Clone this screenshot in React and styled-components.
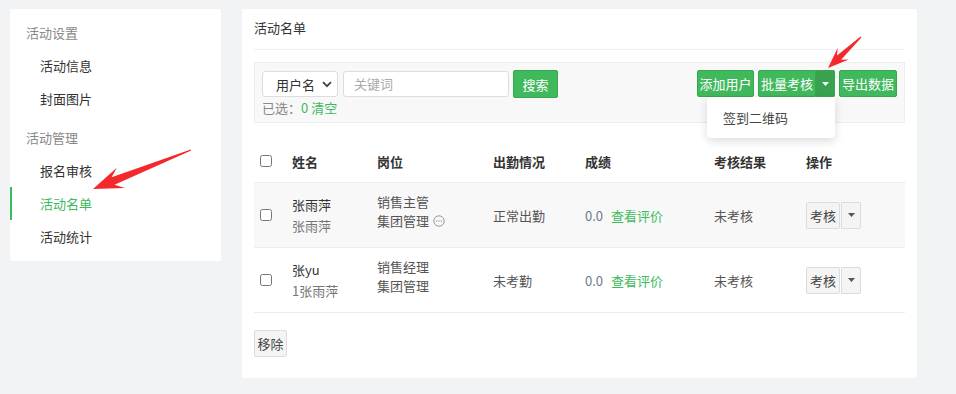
import React from 'react'
import styled, { createGlobalStyle } from 'styled-components'

const GlobalStyle = createGlobalStyle`
    body {
        margin: 0;
        background: #f2f3f5;
        font-family: "Noto Sans CJK SC", "Liberation Sans", sans-serif;
        font-size: 13px;
        color: #333;
    }
`

const GREEN = '#40b95c'

const rows = [
    { name: '张雨萍', sub: '张雨萍', job: '销售主管', dept: '集团管理', more: true, attend: '正常出勤', score: '0.0', result: '未考核', striped: true },
    { name: '张yu', sub: '1张雨萍', job: '销售经理', dept: '集团管理', more: false, attend: '未考勤', score: '0.0', result: '未考核', striped: false },
]

function arrowPoints(tail, tip, head, hw, sw) {
    const dx = tip[0] - tail[0]
    const dy = tip[1] - tail[1]
    const len = Math.hypot(dx, dy)
    const ux = dx / len
    const uy = dy / len
    const nx = -uy
    const ny = ux
    const neck = [tip[0] - ux * head * 0.72, tip[1] - uy * head * 0.72]
    const wing = [tip[0] - ux * head, tip[1] - uy * head]
    const pts = [
        [tail[0] + nx * 0.6, tail[1] + ny * 0.6],
        [neck[0] + nx * sw, neck[1] + ny * sw],
        [wing[0] + nx * hw, wing[1] + ny * hw],
        tip,
        [wing[0] - nx * hw, wing[1] - ny * hw],
        [neck[0] - nx * sw, neck[1] - ny * sw],
        [tail[0] - nx * 0.6, tail[1] - ny * 0.6],
    ]
    return pts.map(p => p.map(v => v.toFixed(1)).join(',')).join(' ')
}

function Caret({ color = '#fff' }) {
    return (
        <svg width="7" height="4" viewBox="0 0 7 4">
            <path d="M0 0 L7 0 L3.5 4 Z" fill={color} />
        </svg>
    )
}

function MoreIcon() {
    return (
        <svg width="12" height="12" viewBox="0 0 12 12" style={{ marginLeft: 4, verticalAlign: '-1px' }}>
            <circle cx="6" cy="6" r="5.2" fill="none" stroke="#999" strokeWidth="1" />
            <circle cx="3.7" cy="6" r="0.7" fill="#999" />
            <circle cx="6" cy="6" r="0.7" fill="#999" />
            <circle cx="8.3" cy="6" r="0.7" fill="#999" />
        </svg>
    )
}

function App() {
    return (
        <Page>
            <GlobalStyle />
            <Sidebar>
                <GroupTitle>活动设置</GroupTitle>
                <NavItem>活动信息</NavItem>
                <NavItem>封面图片</NavItem>
                <GroupTitle $gap>活动管理</GroupTitle>
                <NavItem>报名审核</NavItem>
                <NavItem $active>活动名单</NavItem>
                <NavItem>活动统计</NavItem>
            </Sidebar>

            <Main>
                <Title>活动名单</Title>

                <Toolbar>
                    <SearchArea>
                        <SearchRow>
                            <Select>
                                <span>用户名</span>
                                <svg width="10" height="7" viewBox="0 0 10 7">
                                    <path d="M1 1.2 L5 5.2 L9 1.2" fill="none" stroke="#444" strokeWidth="1.8" />
                                </svg>
                            </Select>
                            <Input>关键词</Input>
                            <GreenButton $w={45} $h={28}>搜索</GreenButton>
                        </SearchRow>
                        <Selected>已选：<Green>0 清空</Green></Selected>
                    </SearchArea>

                    <Actions>
                        <GreenButton $w={57}>添加用户</GreenButton>
                        <SplitWrap>
                            <GreenButton $w={58} $joinRight>批量考核</GreenButton>
                            <CaretButton><Caret /></CaretButton>
                            <Menu>
                                <MenuItem>签到二维码</MenuItem>
                            </Menu>
                        </SplitWrap>
                        <GreenButton $w={58}>导出数据</GreenButton>
                    </Actions>
                </Toolbar>

                <Table>
                    <HeadRow>
                        <CheckCell><Check type="checkbox" /></CheckCell>
                        <div>姓名</div>
                        <div>岗位</div>
                        <div>出勤情况</div>
                        <div>成绩</div>
                        <div>考核结果</div>
                        <div>操作</div>
                    </HeadRow>
                    {rows.map(r => (
                        <Row key={r.sub} $striped={r.striped}>
                            <CheckCell><Check type="checkbox" /></CheckCell>
                            <NameCell>
                                <div>{r.name}</div>
                                <Sub>{r.sub}</Sub>
                            </NameCell>
                            <JobCell>
                                <div>{r.job}</div>
                                <div>{r.dept}{r.more && <MoreIcon />}</div>
                            </JobCell>
                            <Plain>{r.attend}</Plain>
                            <div>
                                <Score>{r.score}</Score>
                                <Green>查看评价</Green>
                            </div>
                            <Plain>{r.result}</Plain>
                            <OpGroup>
                                <GrayButton>考核</GrayButton>
                                <GrayCaret><Caret color="#555" /></GrayCaret>
                            </OpGroup>
                        </Row>
                    ))}
                </Table>

                <Footer>
                    <GrayButton $w={33}>移除</GrayButton>
                </Footer>
            </Main>

            <Overlay width="956" height="394" viewBox="0 0 956 394">
                <polygon points={arrowPoints([861, 37], [828, 68], 21, 8, 3)} fill="#f5282c" />
                <polygon points={arrowPoints([823, 113], [784, 124], 17, 7, 2.5)} fill="#f5282c" />
                <polygon points={arrowPoints([191, 150], [93, 189], 30, 11, 4)} fill="#f5282c" />
            </Overlay>
        </Page>
    )
}

export default App

const Page = styled.div`
    position: relative;
    width: 956px;
    height: 394px;
    box-sizing: border-box;
    padding: 9px 10px;
    display: flex;
    align-items: flex-start;
    gap: 21px;
    overflow: hidden;
`

const Sidebar = styled.div`
    width: 211px;
    background: #fff;
    border-radius: 2px;
    padding: 8px 0;
    display: flex;
    flex-direction: column;
`

const GroupTitle = styled.div`
    height: 32px;
    line-height: 32px;
    padding-left: 16px;
    color: #888;
    margin-top: ${props => props.$gap ? '7px' : '0'};
`

const NavItem = styled.div`
    height: 33px;
    line-height: 33px;
    padding-left: 28px;
    color: ${props => props.$active ? '#3cbb5c' : '#333'};
    border-left: 2px solid ${props => props.$active ? '#3cbb5c' : 'transparent'};
`

const Main = styled.div`
    width: 675px;
    background: #fff;
    border-radius: 2px;
    padding: 0 12px 21px;
    box-sizing: border-box;
`

const Title = styled.div`
    height: 40px;
    line-height: 38px;
    border-bottom: 1px solid #eef0f2;
    color: #333;
`

const Toolbar = styled.div`
    margin-top: 12px;
    height: 61px;
    box-sizing: border-box;
    background: #f8f8f8;
    border: 1px solid #eeeeee;
    padding: 7px 7px 0;
    display: flex;
    justify-content: space-between;
    align-items: flex-start;
`

const SearchArea = styled.div`
    display: flex;
    flex-direction: column;
`

const SearchRow = styled.div`
    display: flex;
    align-items: center;
    gap: 4px;
    height: 28px;
`

const Select = styled.div`
    width: 76px;
    height: 26px;
    box-sizing: border-box;
    background: #fff;
    border: 1px solid #ddd;
    border-radius: 3px;
    display: flex;
    align-items: center;
    justify-content: space-between;
    padding: 0 5px 0 13px;
    color: #333;
    margin-right: 1px;
`

const Input = styled.div`
    width: 166px;
    height: 26px;
    box-sizing: border-box;
    background: #fff;
    border: 1px solid #ddd;
    border-radius: 3px;
    padding-left: 10px;
    line-height: 24px;
    color: #aaa;
`

const Selected = styled.div`
    margin-top: 1px;
    line-height: 18px;
    color: #888;
`

const Green = styled.span`
    color: #3cbb5c;
`

const Actions = styled.div`
    display: flex;
    gap: 4px;
    align-items: flex-start;
`

const GreenButton = styled.div`
    width: ${props => props.$w}px;
    height: ${props => props.$h || 27}px;
    box-sizing: border-box;
    background: ${GREEN};
    border: 1px solid #36a64f;
    border-radius: ${props => props.$joinRight ? '2px 0 0 2px' : '2px'};
    color: #fff;
    display: flex;
    align-items: center;
    justify-content: center;
    white-space: nowrap;
    cursor: pointer;
`

const SplitWrap = styled.div`
    position: relative;
    display: flex;
`

const CaretButton = styled.div`
    width: 19px;
    height: 27px;
    box-sizing: border-box;
    background: #38a24f;
    border: 1px solid #36a64f;
    border-left: none;
    border-radius: 0 2px 2px 0;
    display: flex;
    align-items: center;
    justify-content: center;
`

const Menu = styled.div`
    position: absolute;
    top: 27px;
    right: 0;
    width: 128px;
    height: 41px;
    background: #fff;
    border-radius: 4px;
    box-shadow: 0 3px 10px rgba(0, 0, 0, 0.14);
    z-index: 2;
`

const MenuItem = styled.div`
    padding: 12px 16px 0;
    line-height: 18px;
    color: #444;
`

const COLS = '38px 85px 116px 92px 129px 92px 99px'

const Table = styled.div`
    margin-top: 17px;
`

const HeadRow = styled.div`
    display: grid;
    grid-template-columns: ${COLS};
    height: 42px;
    align-items: center;
    font-weight: bold;
    color: #333;
    border-bottom: 1px solid #e8eef5;
`

const Row = styled.div`
    display: grid;
    grid-template-columns: ${COLS};
    height: 65px;
    box-sizing: border-box;
    align-items: center;
    background: ${props => props.$striped ? '#f8f8f8' : '#fff'};
    border-bottom: 1px solid #e8eef5;
`

const CheckCell = styled.div`
    padding-left: 6px;
    display: flex;
    align-items: center;
`

const Check = styled.input`
    margin: 0;
    width: 12px;
    height: 12px;
`

const NameCell = styled.div`
    line-height: 21px;
    color: #333;
`

const Sub = styled.div`
    color: #777;
`

const JobCell = styled.div`
    line-height: 19px;
    color: #555;
    padding-bottom: 9px;
`

const Plain = styled.div`
    color: #555;
`

const Score = styled.span`
    color: #6b7a8c;
    margin-right: 8px;
`

const OpGroup = styled.div`
    display: flex;
`

const GrayButton = styled.div`
    width: ${props => props.$w || 34}px;
    height: 27px;
    box-sizing: border-box;
    background: #f4f4f4;
    border: 1px solid #dcdcdc;
    border-radius: 2px;
    display: flex;
    align-items: center;
    justify-content: center;
    color: #444;
`

const GrayCaret = styled.div`
    width: 20px;
    height: 27px;
    box-sizing: border-box;
    background: #f4f4f4;
    border: 1px solid #dcdcdc;
    border-radius: 0 2px 2px 0;
    margin-left: 1px;
    display: flex;
    align-items: center;
    justify-content: center;
`

const Footer = styled.div`
    margin-top: 17px;
`

const Overlay = styled.svg`
    position: absolute;
    top: 0;
    left: 0;
    pointer-events: none;
`
